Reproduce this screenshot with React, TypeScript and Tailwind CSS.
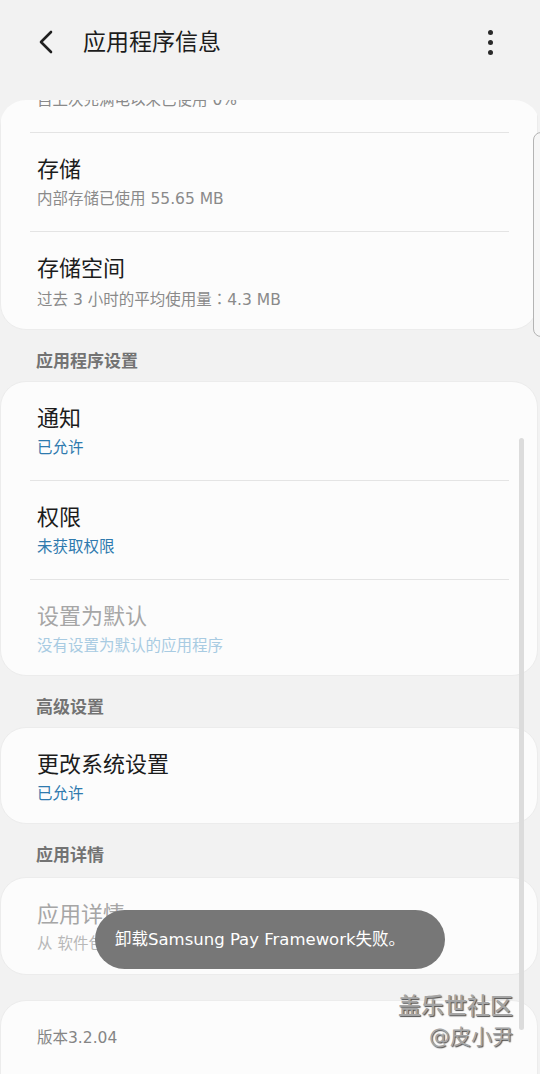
import React from "react";

const FONT = "font-['DejaVu_Sans','Noto_Sans_CJK_SC',sans-serif]";

function Row({
  title,
  sub,
  subColor = "text-[#8a8a8a]",
  titleColor = "text-[#1c1c1c]",
  h = "h-[98px]",
}: {
  title: string;
  sub?: React.ReactNode;
  subColor?: string;
  titleColor?: string;
  h?: string;
}) {
  return (
    <div className={`${h} pl-[36px] pt-[22px] flex flex-col gap-[4px]`}>
      <div className={`text-[22px] leading-[30px] ${titleColor}`}>{title}</div>
      {sub && <div className={`text-[15.5px] leading-[20px] ${subColor}`}>{sub}</div>}
    </div>
  );
}

function Sep() {
  return <div className="h-px bg-[#e4e4e4] ml-[29px] mr-[28px]" />;
}

function Section({ label, h = "h-[51px]" }: { label: string; h?: string }) {
  return (
    <div className={`${h} pl-[36px] pt-[20px]`}>
      <div className="text-[17px] leading-[22px] font-bold text-[#737373]">{label}</div>
    </div>
  );
}

const card = "bg-[#fcfcfc] rounded-[26px] mr-[2px] border border-[#ececec] overflow-hidden";

export default function App() {
  return (
    <div className={`relative w-[540px] h-[1074px] overflow-hidden bg-[#f2f2f2] ${FONT}`}>
      {/* Header */}
      <div className="h-[100px]">
        <div className="h-[84px] flex items-center">
          <div className="w-[83px] pl-[36px] flex items-center">
            <svg width="20" height="26" viewBox="0 0 20 26">
              <path d="M15 3 L5 13 L15 23" fill="none" stroke="#1f1f1f" strokeWidth="2.6" strokeLinecap="round" strokeLinejoin="round" />
            </svg>
          </div>
          <div className="flex-1 text-[23px] leading-[30px] text-[#1c1c1c]">应用程序信息</div>
          <div className="w-[20px] mr-[40px] flex flex-col items-center gap-[5px]">
            <div className="w-[5px] h-[5px] rounded-full bg-[#2a2a2a]" />
            <div className="w-[5px] h-[5px] rounded-full bg-[#2a2a2a]" />
            <div className="w-[5px] h-[5px] rounded-full bg-[#2a2a2a]" />
          </div>
        </div>
      </div>

      {/* Scroll viewport */}
      <div className="h-[974px] overflow-hidden rounded-t-[26px]">
        <div className={`${card} mt-[-67px]`}>
          <Row title="电池" sub="自上次充满电以来已使用 0%" />
          <Sep />
          <Row title="存储" sub="内部存储已使用 55.65 MB" />
          <Sep />
          <Row
            title="存储空间"
            sub={
              <>
                过去 3 小时的平均使用量
                <span className="font-['Noto_Sans_CJK_TC',sans-serif]">：</span>
                4.3 MB
              </>
            }
            h="h-[97px]"
          />
        </div>

        <Section label="应用程序设置" />
        <div className={card}>
          <Row title="通知" sub="已允许" subColor="text-[#2f7aae]" />
          <Sep />
          <Row title="权限" sub="未获取权限" subColor="text-[#2f7aae]" />
          <Sep />
          <Row
            title="设置为默认"
            sub="没有设置为默认的应用程序"
            titleColor="text-[#a6a6a6]"
            subColor="text-[#a8cbe2]"
            h="h-[95px]"
          />
        </div>

        <Section label="高级设置" />
        <div className={card}>
          <Row title="更改系统设置" sub="已允许" subColor="text-[#2f7aae]" h="h-[95px]" />
        </div>

        <Section label="应用详情" h="h-[53px]" />
        <div className={card}>
          <Row
            title="应用详情"
            sub="从 软件包安装程序安装的应用"
            titleColor="text-[#a6a6a6]"
            subColor="text-[#b8b8b8]"
            h="h-[96px]"
          />
        </div>

        <div className="h-[25px]" />
        <div className={card}>
          <div className="h-[100px] pl-[36px] pt-[26px]">
            <div className="text-[15.5px] leading-[22px] text-[#858585]">版本3.2.04</div>
          </div>
        </div>
      </div>

      {/* Edge panel handle */}
      <div className="absolute left-[533px] top-[132px] w-[20px] h-[205px] rounded-[8px] border border-[#b4b4b4] bg-[#f6f6f6]" />

      {/* Scrollbar */}
      <div className="absolute left-[519px] top-[438px] w-[5px] h-[592px] rounded-full bg-[#dcdcdc]" />

      {/* Toast */}
      <div className="absolute left-[95px] top-[910px] w-[350px] h-[59px] rounded-full bg-[#777777] flex items-center pl-[20px]">
        <span className="text-[16.5px] leading-[24px] text-white">卸载Samsung Pay Framework失败。</span>
      </div>

      {/* Watermark */}
      <div className="absolute right-[27px] top-[990px] flex flex-col items-end">
        <div className="text-[23px] leading-[32px] font-medium text-[#a5a5a5] [text-shadow:1px_1px_1px_#505050]">盖乐世社区</div>
        <div className="text-[21px] leading-[30px] text-[#a5a5a5] [text-shadow:1px_1px_1px_#505050]">@皮小尹</div>
      </div>
    </div>
  );
}
